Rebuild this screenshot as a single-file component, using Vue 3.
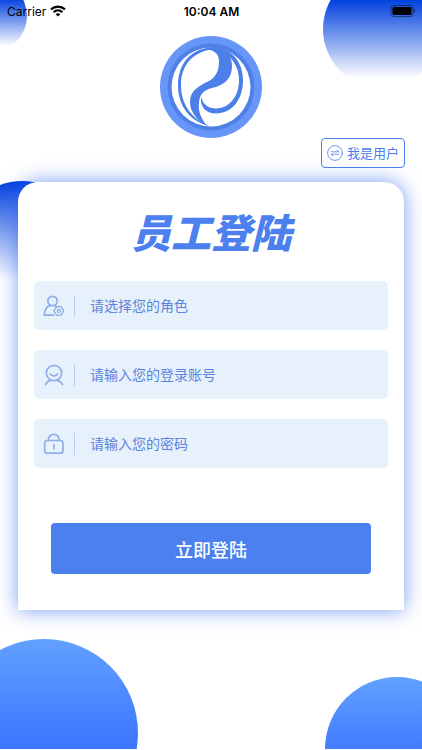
<template>
  <div class="page">
    <div class="backdrop" aria-hidden="true">
      <span class="bubble fade top-left"></span>
      <span class="bubble fade top-right"></span>
      <span class="bubble fade middle"></span>
      <span class="bubble solid bottom-left"></span>
      <span class="bubble solid bottom-right"></span>
    </div>

    <header class="status-bar">
      <div class="carrier">
        <span>Carrier</span>
        <svg width="16" height="12" viewBox="0 0 16 12" fill="none" stroke="#000" stroke-width="2.2">
          <path d="M1 4.4C5 .6 11 .6 15 4.4"></path>
          <path d="M3.6 7.2c2.6-2.4 6.2-2.4 8.8 0"></path>
          <path d="M8 11.6 5.6 9.2c1.4-1.2 3.4-1.2 4.8 0z" fill="#000" stroke="none"></path>
        </svg>
      </div>
      <div class="time">10:04 AM</div>
      <div class="battery">
        <svg width="26" height="12" viewBox="0 0 26 12">
          <rect x="1" y=".5" width="22" height="11" rx="3" fill="none" stroke="#000" stroke-opacity=".45"></rect>
          <rect x="2.5" y="2" width="19" height="8" rx="1.6"></rect>
          <path d="M24.2 4v4c1.4-.6 1.4-3.4 0-4z" fill-opacity=".5"></path>
        </svg>
      </div>
    </header>

    <svg class="logo" viewBox="0 0 102 102" role="img" aria-label="logo">
      <circle cx="51" cy="51" r="51" fill="#6796f8"></circle>
      <circle cx="51" cy="51" r="43.5" fill="#4f80e8"></circle>
      <circle cx="51" cy="51" r="39.5" fill="#fff"></circle>
      <g fill="#4c80e8">
        <path d="M44 13.500C53 13 59 17 59 25c0 10-3 16-10 20-10 5-19 9-19 21 0 10 7 18 17 24-7-9-9-16-8-24 1-8 5-12 13-14 13-3 20-10 20-22 0-9-5-16-15-19-5 0-10 0-13 2.500z"></path>
        <path d="M55 11.500C30 11 18 29 18 49c0 21 12 37 32 41-18-7-29-21-29-41 0-20 12-34 34-36z"></path>
        <path d="M57 11.500c17 3 26 16 26 33 0 19-11 33-27 33-11 0-16-7-15-17 2 8 7 12 15 12 13 0 23-12 23-28 0-15-8-26-22-31z"></path>
      </g>
    </svg>

    <button type="button" class="switch-btn">
      <svg width="16" height="16" viewBox="0 0 16 16" fill="none" stroke="#4c80ee" stroke-width=".8" stroke-linecap="round" stroke-linejoin="round">
        <circle cx="8" cy="8" r="7.400"></circle>
        <path d="M4 6.800h8L10 5M12 9.200H4L6 11"></path>
      </svg>
      <span>我是用户</span>
    </button>

    <form class="card" @submit.prevent>
      <h1>员工登陆</h1>

      <div class="fields">
        <div class="field">
          <label for="role" aria-label="角色">
            <svg width="22" height="22" viewBox="0 0 22 22" class="icon">
              <circle cx="9.500" cy="6" r="4.700"></circle>
              <path d="M10.500 20.200H1.300c0-5.200 2.400-8.600 6-9.600M11.500 10.700c1 .2 1.800.600 2.500 1.100"></path>
              <path d="M13.500 11.700h4.600l2.600 4.200-2.600 4.300h-4.600l-2.600-4.300z" stroke-width="1.300"></path>
              <circle cx="15.800" cy="15.900" r="1.500" stroke-width="1.300"></circle>
            </svg>
          </label>
          <select id="role" v-model="role">
            <option value="">请选择您的角色</option>
          </select>
        </div>

        <div class="field">
          <label for="account" aria-label="账号">
            <svg width="22" height="22" viewBox="0 0 22 22" class="icon">
              <circle cx="11" cy="9" r="7.700"></circle>
              <path d="M7.500 10c1.700 2.600 5.300 2.600 7 0M2.500 20.500c1.200-2.300 3.100-3.600 5.300-4.100M19.500 20.500c-1.200-2.300-3.100-3.600-5.300-4.100"></path>
            </svg>
          </label>
          <input id="account" v-model="account" type="text" placeholder="请输入您的登录账号">
        </div>

        <div class="field">
          <label for="password" aria-label="密码">
            <svg width="22" height="22" viewBox="0 0 22 22" class="icon">
              <rect x="1.700" y="7.500" width="18.300" height="12.700" rx="2.500"></rect>
              <path d="M5.300 7.300c.7-8 10.300-8 11 0M10.900 11.800v4"></path>
            </svg>
          </label>
          <input id="password" v-model="password" type="password" placeholder="请输入您的密码">
        </div>
      </div>

      <button type="submit" class="submit-btn">立即登陆</button>
    </form>
  </div>
</template>

<script setup>
import { ref } from 'vue'

const role = ref('')
const account = ref('')
const password = ref('')
</script>

<style>
body {
  margin: 0;
  background: #fff;
}
</style>

<style scoped>
.page {
  position: relative;
  display: flex;
  flex-direction: column;
  min-height: 100vh;
  box-sizing: border-box;
  padding-bottom: 40px;
  overflow: hidden;
  font-family: "Liberation Sans", "Noto Sans CJK SC", sans-serif;
  color: #4c80ee;
}

.backdrop {
  position: absolute;
  inset: 0 0 1px;
  z-index: -1;
  overflow: hidden;
}

.bubble {
  position: absolute;
  border-radius: 50%;
}

.fade {
  background: linear-gradient(#0040de 25%, #fff 92%);
}

.solid {
  background: linear-gradient(#62a0ff, #3b76ff 58%);
}

.top-left {
  top: -20px;
  left: -45px;
  width: 72px;
  height: 72px;
}

.top-right {
  top: -30px;
  right: -19px;
  width: 118px;
  height: 118px;
}

.middle {
  top: 181px;
  left: -40px;
  width: 124px;
  height: 124px;
  background: linear-gradient(#0040de, #fff 80%);
}

.bottom-left {
  bottom: -78px;
  left: -50px;
  width: 188px;
  height: 188px;
}

.bottom-right {
  right: -47px;
  bottom: -72px;
  width: 144px;
  height: 144px;
}

.status-bar {
  display: grid;
  grid-template-columns: 1fr auto 1fr;
  align-items: center;
  height: 22px;
  padding: 0 6px 0 7px;
  font-family: Inter, sans-serif;
  font-size: 12px;
  color: #000;
}

.carrier {
  display: flex;
  align-items: center;
  gap: 4px;
}

.time {
  font-weight: 600;
}

.battery {
  display: flex;
  justify-content: flex-end;
}

.logo {
  align-self: center;
  width: 102px;
  height: 102px;
  margin-top: 14px;
}

.switch-btn {
  display: flex;
  align-items: center;
  justify-content: center;
  align-self: flex-end;
  gap: 4px;
  height: 30px;
  margin-right: 17px;
  padding: 0 5px;
  border: 1px solid #4c80ee;
  border-radius: 4px;
  background: #fff;
  color: #4c80ee;
  font: 13px/18px "Noto Sans CJK SC", sans-serif;
}

.switch-btn span {
  padding-bottom: 1px;
}

.card {
  margin: 14px 18px 0;
  padding: 24px 16px 36px;
  border-radius: 20px 20px 0 0;
  background: #fff;
  box-shadow: 0 0 20px rgba(40, 95, 240, 0.64);
}

h1 {
  margin: 0;
  font-family: "Noto Sans CJK SC", sans-serif;
  font-size: 40px;
  font-style: italic;
  font-weight: 900;
  line-height: 50px;
  text-align: center;
}

.fields {
  display: flex;
  flex-direction: column;
  gap: 20px;
  margin-top: 25px;
}

.field {
  display: flex;
  align-items: center;
  height: 49px;
  border-radius: 5px;
  background: #e6f1fb;
}

.field label {
  display: flex;
  padding: 0 9px;
  border-right: 1px solid #b9cef4;
}

.icon {
  fill: none;
  stroke: #91aee8;
  stroke-width: 1.7;
  stroke-linecap: round;
  stroke-linejoin: round;
}

.field input,
.field select {
  flex: 1;
  min-width: 0;
  height: 100%;
  box-sizing: border-box;
  margin: 0;
  padding: 0 15px 2px;
  border: none;
  outline: none;
  appearance: none;
  background: transparent;
  color: #5b84e0;
  font: 14px "Noto Sans CJK SC", sans-serif;
}

.field input::placeholder {
  color: #5b84e0;
  opacity: 1;
}

.submit-btn {
  display: block;
  width: calc(100% - 34px);
  height: 51px;
  margin: 55px auto 0;
  border: none;
  border-radius: 4px;
  background: #4c80ee;
  color: #fff;
  font: 500 18px "Noto Sans CJK SC", sans-serif;
}
</style>
